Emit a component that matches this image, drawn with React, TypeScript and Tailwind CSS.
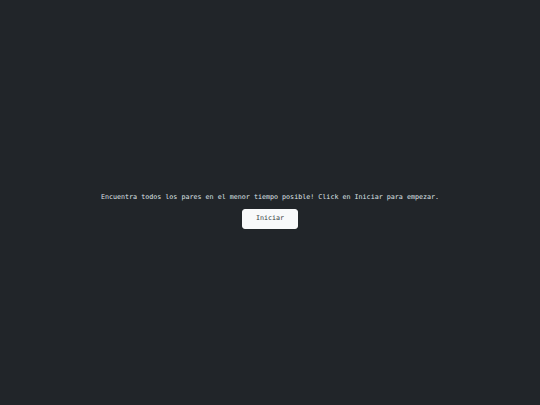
export default function App() {
  return (
    <div className="min-h-screen w-full bg-[#212529] flex flex-col items-center justify-center pt-[15px] text-[#dee2e6] antialiased" style={{ fontFamily: '"DejaVu Sans Mono", monospace' }}>
      <p className="text-[6.7px] leading-[10px] tracking-normal">
        Encuentra todos los pares en el menor tiempo posible! Click en Iniciar para empezar.
      </p>
      <button className="mt-[7px] w-[56px] h-[20px] rounded-[3px] bg-[#f8f9fa] text-[#343a40] text-[6.7px] border border-[#f8f9fa]">
        Iniciar
      </button>
    </div>
  );
}
